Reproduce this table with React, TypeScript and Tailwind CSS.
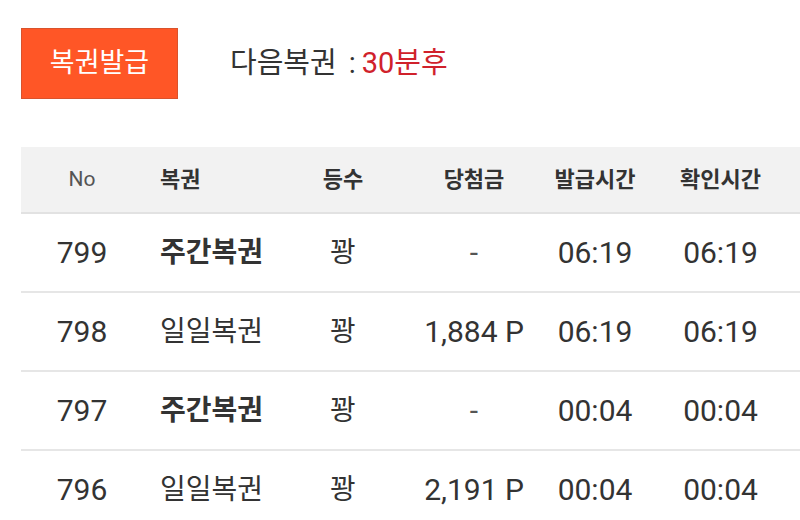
import React from 'react';

type Row = {
  no: string;
  kind: string;
  weekly: boolean;
  rank: string;
  prize: string;
  issued: string;
  checked: string;
};

const rows: Row[] = [
  { no: '799', kind: '주간복권', weekly: true, rank: '꽝', prize: '-', issued: '06:19', checked: '06:19' },
  { no: '798', kind: '일일복권', weekly: false, rank: '꽝', prize: '1,884 P', issued: '06:19', checked: '06:19' },
  { no: '797', kind: '주간복권', weekly: true, rank: '꽝', prize: '-', issued: '00:04', checked: '00:04' },
  { no: '796', kind: '일일복권', weekly: false, rank: '꽝', prize: '2,191 P', issued: '00:04', checked: '00:04' },
];

const font = "font-['Roboto','Noto_Sans_CJK_KR',sans-serif]";
const cols = 'grid grid-cols-[122px_148px_104px_158px_84px_1fr] items-center';

export default function App() {
  return (
    <div className={`w-[800px] h-[520px] overflow-hidden bg-white ${font} text-[#333]`}>
      {/* top bar */}
      <div className="flex items-center pl-[21px] pt-[28px]">
        <button className="w-[157px] h-[71px] bg-[#ff5626] border border-[#d9532c] text-white text-[27px] flex items-center justify-center">
          복권발급
        </button>
        <div className="ml-[52px] flex items-center text-[29px] leading-none text-[#333]">
          <span>다음복권</span>
          <span className="ml-[12px] mr-[6px]">:</span>
          <span className="text-[#d0212b]">30분후</span>
        </div>
      </div>

      {/* table */}
      <div className="ml-[21px] mt-[48px]">
        <div className={`${cols} h-[67px] bg-[#f2f2f2] border-b-2 border-[#e2e2e2] text-[22px]`}>
          <div className="text-center text-[#555] text-[21px]">No</div>
          <div className="pl-[17px] font-bold">복권</div>
          <div className="text-center font-bold">등수</div>
          <div className="text-center font-bold">당첨금</div>
          <div className="text-center font-bold whitespace-nowrap">발급시간</div>
          <div className="text-center font-bold pl-[4px]">확인시간</div>
        </div>
        {rows.map((r) => (
          <div key={r.no} className={`${cols} h-[79px] border-b-2 border-[#e6e6e6] text-[30px]`}>
            <div className="text-center">{r.no}</div>
            <div className={`pl-[17px] text-[28px] ${r.weekly ? 'font-bold' : ''}`}>{r.kind}</div>
            <div className="text-center text-[28px]">{r.rank}</div>
            <div className={`text-center ${r.prize === '-' ? 'text-[#555]' : ''}`}>{r.prize}</div>
            <div className="text-center">{r.issued}</div>
            <div className="text-center pl-[4px]">{r.checked}</div>
          </div>
        ))}
      </div>
    </div>
  );
}
